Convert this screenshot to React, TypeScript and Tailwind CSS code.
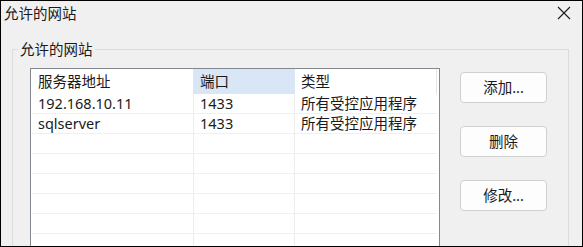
import React from 'react';

const font = { fontFamily: '"Noto Sans", "Noto Sans CJK SC", sans-serif' };

const rows = [
  { host: '192.168.10.11', port: '1433', type: '所有受控应用程序' },
  { host: 'sqlserver', port: '1433', type: '所有受控应用程序' },
  { host: '', port: '', type: '' },
  { host: '', port: '', type: '' },
  { host: '', port: '', type: '' },
  { host: '', port: '', type: '' },
  { host: '', port: '', type: '' },
  { host: '', port: '', type: '' },
];

function Btn({ children }: { children: React.ReactNode }) {
  return (
    <button className="h-[31px] w-[87px] rounded-[4px] border border-[#d0d0d0] bg-[#fdfdfd] text-[14.5px] leading-none text-[#1a1a1a]">
      {children}
    </button>
  );
}

export default function App() {
  return (
    <div
      className="h-[247px] w-[583px] overflow-hidden border border-black bg-[#f0f0f0] text-[#1a1a1a]"
      style={font}
    >
      {/* barra de título */}
      <div className="flex h-[24px] items-center justify-between pl-[3px] pr-[11px]">
        <span className="text-[14.5px] leading-none">允许的网站</span>
        <svg width="14" height="14" viewBox="0 0 14 14" className="mt-[-1px]">
          <path d="M1 1 L13 13 M13 1 L1 13" stroke="#1a1a1a" strokeWidth="1.1" />
        </svg>
      </div>

      <fieldset className="ml-[11px] mt-[15px] h-[230px] w-[557px] border border-[#dcdcdc]">
        <legend className="ml-[5px] px-[2px] text-[14.5px] leading-[18px]">允许的网站</legend>

        <div className="flex pl-[17px] pt-[10px]">
          {/* lista */}
          <div className="h-[200px] w-[410px] border border-[#828790] bg-white">
            <div className="flex h-[25px] text-[14.5px]">
              <div className="flex w-[162px] items-center pl-[7px]">服务器地址</div>
              <div className="flex w-[102px] items-center bg-[#d9e6f5] pl-[7px]">端口</div>
              <div className="flex w-[142px] items-center border-r border-[#e5e5e5] pl-[6px]">类型</div>
            </div>
            {rows.map((r, i) => (
              <div
                key={i}
                className="ml-[1px] flex h-[20px] w-[405px] border-b border-[#f0f0f0] text-[14.5px] leading-[19px]"
              >
                <div className="w-[162px] border-r border-[#ececec] pl-[6px]">{r.host}</div>
                <div className="w-[101px] border-r border-[#ececec] pl-[6px]">{r.port}</div>
                <div className="flex-1 pl-[6px]">{r.type}</div>
              </div>
            ))}
          </div>

          {/* botões */}
          <div className="ml-[20px] mt-[4px] flex flex-col gap-[23px]">
            <Btn>添加...</Btn>
            <Btn>删除</Btn>
            <Btn>修改...</Btn>
          </div>
        </div>
      </fieldset>
    </div>
  );
}
